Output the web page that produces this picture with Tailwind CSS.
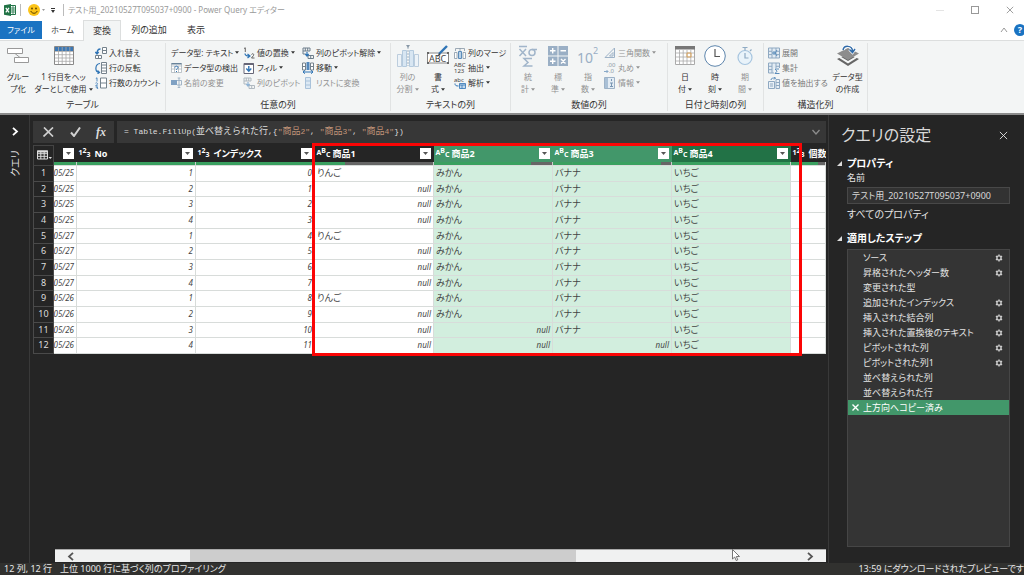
<!DOCTYPE html>
<html lang="ja">
<head>
    <meta charset="UTF-8">
    <meta name="viewport" content="width=device-width, initial-scale=1.0">
    <title>Power Query エディター</title>
    <script src="https://cdn.jsdelivr.net/npm/@tailwindcss/browser@4"></script>
</head>
<body class="h-screen flex flex-col overflow-hidden bg-[#252525] text-[9px] leading-[12px] text-[#333] whitespace-nowrap font-['Noto_Sans','Noto_Sans_CJK_JP',sans-serif] [font-feature-settings:'palt']">

    <!-- Shared icons -->
    <svg class="hidden">
        <symbol id="caret" viewBox="0 0 5 3"><path d="M0 0h5L2.5 3z" fill="currentColor"/></symbol>
        <symbol id="close" viewBox="0 0 10 10"><path d="M1 1l8 8M9 1L1 9" stroke="currentColor" fill="none"/></symbol>
        <symbol id="gear" viewBox="0 0 10 10">
            <circle cx="5" cy="5" r="2.6" fill="none" stroke="currentColor" stroke-width="1.7"/>
            <path d="M5 .6v1.6M5 7.8v1.6M1.2 2.8l1.4.8M7.4 6.4l1.4.8M1.2 7.2l1.4-.8M7.4 3.6l1.4-.8" stroke="currentColor" stroke-width="1.8"/>
        </symbol>
        <symbol id="pivot" viewBox="0 0 12 12">
            <path d="M1 1h7v3H1zM3.3 1v3M5.7 1v3M1 4v3h2.5M6 8.500h5.500v3H6zM8.700 8.500v3" fill="none" stroke="#6e7f8d"/>
            <path d="M5 5v3.500M3.300 7L5 9l1.700-2" fill="none" stroke="#2f74b5" stroke-width="1.200"/>
        </symbol>
        <symbol id="columns" viewBox="0 0 12 12">
            <path d="M.5 1h11v10H.5zM4 1v10M8 1v10M.5 4.300H4M.5 7.600H4M8 4.300h3.500M8 7.600h3.500" fill="#e3ecf4" stroke="#8fa9c2"/>
        </symbol>
    </svg>

    <!-- Title bar -->
    <header class="h-5 shrink-0 bg-white flex items-center pl-1 text-[#9a9a9a]">
        <svg class="w-3 h-3" viewBox="0 0 12 12">
            <path d="M6 1.500h5.500v9H6" fill="#fff" stroke="#217346"/>
            <path d="M6 4h5M6 6h5M6 8h5M9 2v8" stroke="#217346" stroke-width=".8"/>
            <path d="M0 1.300L7 0v12L0 10.700z" fill="#217346"/>
            <path d="M1.800 3.800l3.200 4.500M5 3.800L1.800 8.300" stroke="#fff" stroke-width="1.200"/>
        </svg>
        <span class="w-px h-3 ml-1 bg-[#bbb]"></span>
        <svg class="w-3 h-3 ml-[7px]" viewBox="0 0 12 12">
            <circle cx="6" cy="6" r="6" fill="#fcc419"/>
            <circle cx="4" cy="4.500" r=".9" fill="#5d4300"/><circle cx="8" cy="4.500" r=".9" fill="#5d4300"/>
            <path d="M2.800 7c1 3 5.400 3 6.400 0" fill="none" stroke="#5d4300"/>
        </svg>
        <svg class="w-[3px] h-[2px] ml-0.5"><use href="#caret"/></svg>
        <svg class="w-1 h-[5px] ml-1.5 text-[#333]" viewBox="0 0 4 5"><path d="M0 .5h4" stroke="currentColor"/><path d="M0 2h4L2 5z" fill="currentColor"/></svg>
        <span class="w-px h-3 ml-2 bg-[#bbb]"></span>
        <h1 class="ml-1 text-[8px]">テスト用_20210527T095037+0900 - Power Query エディター</h1>
        <div class="ml-auto flex items-center gap-[27px] pr-2.5">
            <button aria-label="最小化" class="w-2 h-2 flex items-center"><span class="w-full h-px bg-[#e4e4e4]"></span></button>
            <button aria-label="最大化" class="w-2 h-2 border border-[#999]"></button>
            <button aria-label="閉じる" class="w-2 h-2 text-[#888]"><svg class="w-2 h-2"><use href="#close"/></svg></button>
        </div>
    </header>

    <!-- Tabs -->
    <nav class="h-[21px] shrink-0 bg-white border-b border-[#dcdede] flex">
        <button class="w-[42px] h-[18px] mt-px bg-[#1a73c2] text-white text-[8px]">ファイル</button>
        <button class="w-[41px] text-[8px]">ホーム</button>
        <button class="w-[38px] h-[21px] bg-[#f3f5f5] border-x border-t border-[#dcdede]">変換</button>
        <button class="w-[56px]">列の追加</button>
        <button class="w-[38px]">表示</button>
        <div class="ml-auto flex items-center gap-1.5">
            <button aria-label="リボンを折りたたむ" class="w-2"><svg class="w-2 h-1.5" viewBox="0 0 8 6"><path d="M1 5l3-4 3 4" fill="none" stroke="#999"/></svg></button>
            <button aria-label="ヘルプ" class="w-3 h-3 -mr-0.5 rounded-full bg-[#1a73c2] text-white font-bold leading-3">?</button>
        </div>
    </nav>

    <!-- Ribbon -->
    <section class="h-[74px] shrink-0 bg-[#f3f5f5] border-b-2 border-[#8b8b8b] flex pt-0.5 pb-0.5
        [&_button]:text-left [&_button]:text-[8px] [&_button]:shrink-0 [&_.big]:flex [&_.big]:flex-col [&_.big]:items-center [&_.big]:h-[54px] [&_.big]:pt-0.5 [&_.big>svg]:mb-1 [&_.big>svg]:h-[22px] [&_.big>span]:text-center
        [&_.row]:h-[15px] [&_.row]:flex [&_.row]:items-center [&_.row]:gap-[2px] [&_.off]:text-[#929292]">

        <div class="w-[166px] border-r border-[#e1e3e3] flex flex-col justify-between">
            <div class="flex">
                <button class="big w-9">
                    <svg class="w-[22px]" viewBox="0 0 22 22"><path d="M.5 3.500h15v5H.5zM7.500 12.500h14v5h-14zM8 8.500l5 4" fill="#fff" stroke="#999"/></svg>
                    <span>グルー<br>プ化</span>
                </button>
                <button class="big w-[55px]">
                    <svg class="w-5" viewBox="0 0 20 22">
                        <path d="M.5 1.500h19v18H.5z" fill="#fff" stroke="#888"/><path d="M1 2h18v4H1z" fill="#3c78b4"/>
                        <path d="M1 6.500h18M1 9.700h18M1 13h18M1 16.300h18M4.500 2v17M8.200 2v17M12 2v17M15.800 2v17" stroke="#a8a8a8" stroke-width=".8"/>
                    </svg>
                    <span>1 行目をヘッ<br>ダーとして使用 <svg class="inline w-1 h-[3px] mb-px"><use href="#caret"/></svg></span>
                </button>
                <div class="pl-1 pt-0.5">
                    <button class="row"><svg class="w-3 h-3" viewBox="0 0 12 12"><path d="M7.500.5h4v6h-4zM7.500 3.500h4M.5 8.500h6v3h-6zM3.500 8.500v3" fill="#fff" stroke="#75828c"/><path d="M5.500 2C3 2 2 3.500 2 6.500M.3 5L2 7l1.700-2" fill="none" stroke="#2f74b5" stroke-width="1.300"/></svg>入れ替え</button>
                    <button class="row"><svg class="w-3 h-3" viewBox="0 0 12 12"><path d="M6.500.5h5v11h-5zM6.500 3h5M6.500 6h5M6.500 9h5" fill="#fff" stroke="#75828c"/><path d="M5 1.500C-.3 2-.3 10 4 10.500M2.500 8.500l2 2-2 1.300" fill="none" stroke="#2f74b5" stroke-width="1.200"/></svg>行の反転</button>
                    <button class="row"><svg class="w-3 h-3" viewBox="0 0 12 12"><path d="M5.500 1h6v10h-6zM5.500 6h6" fill="#fff" stroke="#75828c"/><path d="M.8 1.500L2 .8V4.500M.5 6.200c1-1 2.500 0 1.800 1L.7 8.800h2M.7 10h2L1.800 11c1.200 0 1.200 1 0 1" fill="none" stroke="#2f74b5" stroke-width=".8"/></svg>行数のカウント</button>
                </div>
            </div>
            <p class="text-center">テーブル</p>
        </div>

        <div class="w-[225px] border-r border-[#e1e3e3] flex flex-col justify-between">
            <div class="flex pl-[5px] pt-0.5">
                <div class="w-[72px]">
                    <button class="row">データ型: テキスト <svg class="w-1 h-[3px]"><use href="#caret"/></svg></button>
                    <button class="row"><svg class="w-[11px] h-3" viewBox="0 0 11 12"><path d="M.5 1.500h10v9H.5zM.5 4h10M3.500 4v6.500M7.500 4v6.500M.5 7h10" fill="#fff" stroke="#a4adb5" stroke-width=".7"/><path d="M.5 1h10v1.500H.5z" fill="#698399"/><path d="M4 5.500c0-2 3-1.600 3 0 0 1-1.500 1-1.500 2.300M5.500 9v1" fill="none" stroke="#2f74b5"/></svg>データ型の検出</button>
                    <button class="row off"><svg class="w-[11px] h-3" viewBox="0 0 11 12"><path d="M0 3h6v5H0z" fill="#7fa1c3"/><path d="M6 3.500h4.500v4.500H6M8 1v9M6.700 1h2.600M6.700 10.500h2.600" fill="none" stroke="#9aafc3" stroke-width=".9"/></svg>名前の変更</button>
                </div>
                <div class="w-[59px]">
                    <button class="row"><svg class="w-3 h-3" viewBox="0 0 12 12"><path d="M1 1.500L2.300.8V5M8.500 7.500c.8-1.500 3-.5 2 1L8.500 11h3" fill="none" stroke="#555" stroke-width=".9"/><path d="M2 6.500c0 2 1 2.500 4 2.500M4.500 7L7 9l-2.500 2" fill="none" stroke="#2f74b5" stroke-width="1.200"/></svg>値の置換 <svg class="w-1 h-[3px]"><use href="#caret"/></svg></button>
                    <button class="row"><svg class="w-3 h-3" viewBox="0 0 12 12"><path d="M1 1.500h9.500v10H1z" fill="#fff" stroke="#667"/><path d="M1 1h9.500v2H1z" fill="#667"/><path d="M5.800 4v5M3.300 6.500l2.500 2.700 2.500-2.700" fill="none" stroke="#2f74b5" stroke-width="1.400"/></svg>フィル <svg class="w-1 h-[3px]"><use href="#caret"/></svg></button>
                    <button class="row off"><svg class="w-3 h-3 opacity-50"><use href="#pivot"/></svg>列のピボット</button>
                </div>
                <div>
                    <button class="row"><svg class="w-3 h-3"><use href="#pivot"/></svg>列のピボット解除 <svg class="w-1 h-[3px]"><use href="#caret"/></svg></button>
                    <button class="row"><svg class="w-3 h-3" viewBox="0 0 12 12"><path d="M.5 1h3v7h-3zM8.500 1h3v7h-3zM.5 4.500h3M8.500 4.500h3" fill="#fff" stroke="#75828c"/><path d="M4.500 0h3v8h-3z" fill="#5488bb"/><path d="M1 10h10M3 8.300L1 10l2 1.700M9 8.300l2 1.700-2 1.700" fill="none" stroke="#2f74b5"/></svg>移動 <svg class="w-1 h-[3px]"><use href="#caret"/></svg></button>
                    <button class="row off"><svg class="w-3 h-3" viewBox="0 0 12 12"><path d="M3.500.5h5v11h-5zM3.500 4h5M3.500 8h5" fill="#dce9f4" stroke="#a9c2da"/></svg>リストに変換</button>
                </div>
            </div>
            <p class="text-center">任意の列</p>
        </div>

        <div class="w-[120px] border-r border-[#e1e3e3] flex flex-col justify-between">
            <div class="flex pl-px">
                <button class="big off w-[31px]">
                    <svg class="w-[22px]" viewBox="0 0 22 22"><path d="M.5 9.500h4v12h-4zM17.500 9.500h4v12h-4z" fill="#edf3f8" stroke="#bccddd"/><path d="M5.500 5.500h4v16h-4zM12.500 5.500h4v16h-4z" fill="#d8e6f2" stroke="#b4cade"/><path d="M11 2v19" stroke="#a3b3c2" stroke-dasharray="2 1"/><path d="M9 0h4l-2 3z" fill="#8797a6"/></svg>
                    <span>列の<br>分割 <svg class="inline w-1 h-[3px] mb-px"><use href="#caret"/></svg></span>
                </button>
                <button class="big w-[30px]">
                    <svg class="w-[22px]" viewBox="0 0 22 22"><path d="M.5 8h21v10H.5z" fill="#fff" stroke="#888"/><path d="M0 7h2v2H0zM20 7h2v2h-2zM0 17h2v2H0zM20 17h2v2h-2z" fill="#666"/><text x="2" y="16.500" font-size="9" fill="#444">ABC</text><path d="M20 1l-8 8" stroke="#2f74b5" stroke-width="2.400"/><path d="M12.500 8l-3 4 4-2z" fill="#444"/></svg>
                    <span>書<br>式 <svg class="inline w-1 h-[3px] mb-px"><use href="#caret"/></svg></span>
                </button>
                <div class="pl-px pt-0.5">
                    <button class="row"><svg class="w-3 h-3" viewBox="0 0 12 12"><path d="M.5 5.500h2.500v6H.5zM9 5.500h2.500v6H9z" fill="#fff" stroke="#8797a6" stroke-width=".8"/><path d="M4.500 4.500h3v7h-3z" fill="#b9d2e8" stroke="#5b8cba"/><path d="M1.500 4V1.500h9V4M6 1v3" fill="none" stroke="#8797a6" stroke-width=".8"/></svg>列のマージ</button>
                    <button class="row"><svg class="w-3 h-3 overflow-visible" viewBox="0 0 12 12" fill="#444"><text x="0" y="5" font-size="6">ABC</text><text x="0" y="11" font-size="6">123</text></svg>抽出 <svg class="w-1 h-[3px]"><use href="#caret"/></svg></button>
                    <button class="row"><svg class="w-3 h-3 overflow-visible" viewBox="0 0 12 12"><text x="0" y="5" font-size="6" fill="#444">abc</text><path d="M5.500 6.500h6v5h-6z" fill="#c3d9ed" stroke="#2f74b5" stroke-width=".8"/><path d="M5.500 8h6M8 8v3.500" stroke="#2f74b5" stroke-width=".8"/><path d="M1 6.500c0 2 1 2.500 3.500 2.500" fill="none" stroke="#2f74b5"/></svg>解析 <svg class="w-1 h-[3px]"><use href="#caret"/></svg></button>
                </div>
            </div>
            <p class="text-center">テキストの列</p>
        </div>

        <div class="w-[157px] border-r border-[#e1e3e3] flex flex-col justify-between text-[#929292]">
            <div class="flex pl-0.5">
                <button class="big w-[30px]">
                    <svg class="w-5" viewBox="0 0 20 22" fill="none" stroke="#a1b5ca" stroke-width="1.500"><path d="M1 1.500h8M1.500 4l6.500 7M8 4l-6.500 7M19 4.500h-5"/><circle cx="14" cy="7.500" r="3"/><path d="M14 13.500H6l4 4-4 3.500h8.500"/></svg>
                    <span>統<br>計 <svg class="inline w-1 h-[3px] mb-px"><use href="#caret"/></svg></span>
                </button>
                <button class="big w-[30px]">
                    <svg class="w-5" viewBox="0 0 20 22"><path d="M0 1h9.500v9.500H0zM10.500 1H20v9.500h-9.500zM0 11.500h9.500V21H0zM10.500 11.500H20V21h-9.500z" fill="#9aafc5"/><path d="M2 5.700h5.500M4.700 3v5.500M12.500 5.700H18M2 16.300h5.500M4.700 13.500V19M13 14l4.500 4.500M17.500 14L13 18.500" stroke="#fff" stroke-width="1.400"/></svg>
                    <span>標<br>準 <svg class="inline w-1 h-[3px] mb-px"><use href="#caret"/></svg></span>
                </button>
                <button class="big w-[30px]">
                    <svg class="w-5 overflow-visible" viewBox="0 0 20 22" fill="#9aafc5"><text x="-1" y="18" font-size="14">10</text><text x="15" y="9" font-size="9">2</text></svg>
                    <span>指<br>数 <svg class="inline w-1 h-[3px] mb-px"><use href="#caret"/></svg></span>
                </button>
                <div class="pl-px pt-0.5">
                    <button class="row"><svg class="w-3 h-3" viewBox="0 0 12 12"><path d="M1 10.500L10.500 1v9.500zM5.500 9L9 5.500V9z" fill="none" stroke="#9db2c7"/></svg>三角関数 <svg class="w-1 h-[3px]"><use href="#caret"/></svg></button>
                    <button class="row"><svg class="w-3 h-3 overflow-visible" viewBox="0 0 12 12"><text x="3" y="5" font-size="6" fill="#8d9aa6">.00</text><text x="5" y="11" font-size="6" fill="#8d9aa6">.0</text><path d="M0 9.500h4M2.500 8L4 9.500 2.500 11" fill="none" stroke="#88a8c7"/></svg>丸め <svg class="w-1 h-[3px]"><use href="#caret"/></svg></button>
                    <button class="row"><svg class="w-3 h-3" viewBox="0 0 12 12"><path d="M.5.5h10v11H.5z" fill="#e3ecf4" stroke="#9db2c7"/><path d="M1 1h3v10H1z" fill="#a9c0d6"/><path d="M7.500 2v2M6 6h3M7.500 6v3.500M6 9.500h3" stroke="#7996b3"/></svg>情報 <svg class="w-1 h-[3px]"><use href="#caret"/></svg></button>
                </div>
            </div>
            <p class="text-center text-[#333]">数値の列</p>
        </div>

        <div class="w-[96px] border-r border-[#e1e3e3] flex flex-col justify-between">
            <div class="flex pl-0.5">
                <button class="big w-[30px]">
                    <svg class="w-5" viewBox="0 0 20 22"><path d="M.5 1.500h19v18H.5z" fill="#fff" stroke="#aaa"/><path d="M0 1h20v3.500H0z" fill="#777"/><path d="M1 8h18M1 12h18M1 16h18M4.500 5v14M8.200 5v14M12 5v14M15.800 5v14" stroke="#aaa" stroke-width=".8"/><path d="M12 8h4v4h-4z" fill="none" stroke="#dca45a"/></svg>
                    <span>日<br>付 <svg class="inline w-1 h-[3px] mb-px"><use href="#caret"/></svg></span>
                </button>
                <button class="big w-[30px]">
                    <svg class="w-[22px]" viewBox="0 0 22 22"><circle cx="11" cy="11" r="10.300" fill="#fff" stroke="#5f86ad"/><path d="M11 4v7.500h5" fill="none" stroke="#555" stroke-width="1.200"/></svg>
                    <span>時<br>刻 <svg class="inline w-1 h-[3px] mb-px"><use href="#caret"/></svg></span>
                </button>
                <button class="big off w-[30px]">
                    <svg class="w-4" viewBox="0 0 16 22"><circle cx="8" cy="12.500" r="7" fill="#e9f3fa" stroke="#a7c5df" stroke-width="1.200"/><path d="M8 5.500V3M5.500 2.500h5M13 6l1.500-1.500M8 8v5h3.500" fill="none" stroke="#8fabc4" stroke-width="1.200"/></svg>
                    <span>期<br>間 <svg class="inline w-1 h-[3px] mb-px"><use href="#caret"/></svg></span>
                </button>
            </div>
            <p class="text-center">日付と時刻の列</p>
        </div>

        <div class="w-[104px] border-r border-[#e1e3e3] flex flex-col justify-between">
            <div class="flex pl-1">
                <div class="w-[63px] pt-0.5 text-[#777]">
                    <button class="row"><svg class="w-3 h-3" viewBox="0 0 12 12"><use href="#columns"/><path d="M6 4v4M4 6h4M9 3L7 6l2 3" fill="none" stroke="#5b8cba"/></svg>展開</button>
                    <button class="row"><svg class="w-3 h-3" viewBox="0 0 12 12"><use href="#columns"/><path d="M6 6h6v6H6z" fill="#f3f5f5"/><path d="M11 7H7l2 2.200L7 11.500h4.500" fill="none" stroke="#5b8cba"/></svg>集計</button>
                    <button class="row"><svg class="w-3 h-3" viewBox="0 0 12 12"><path d="M.5 4.500h6v7h-6zM2 7h3M2 9h3M8 2.500h3.500v9H8zM8 5.500h3.500M8 8.500h3.500" fill="#e9f0f6" stroke="#8fa9c2"/><path d="M3 3c0-2 2-2 4.500-2M6 0l1.500 1L6 2.500" fill="none" stroke="#5b8cba"/></svg>値を抽出する</button>
                </div>
                <button class="big w-[33px]">
                    <svg class="w-[22px]" viewBox="0 0 22 22"><path d="M0 14l11-5 11 5-11 7z" fill="#666"/><path d="M0 9.500l11 6.500 11-6.500v2L11 18.500 0 11.500z" fill="#f3f5f5"/><path d="M0 8.500L11 3l11 5.500L11 15z" fill="#8d8d8d"/><path d="M6 5c1-5 9-5 9.500 1M12.500 4.500l3 3 2.500-3.500" fill="none" stroke="#fff" stroke-width="3"/><path d="M6 5c1-5 9-5 9.500 1M12.500 4.500l3 3 2.500-3.500" fill="none" stroke="#2f6aa8" stroke-width="1.500"/></svg>
                    <span>データ型<br>の作成</span>
                </button>
            </div>
            <p class="text-center">構造化列</p>
        </div>
    </section>

    <div class="flex-1 min-h-0 flex">
        <!-- Collapsed query list -->
        <aside class="w-[30px] shrink-0 border-r border-[#393939] flex flex-col items-center pt-3 text-[#ddd]">
            <button aria-label="展開"><svg class="w-2 h-[9px]" viewBox="0 0 8 9"><path d="M2 .8l4 3.700-4 3.700" fill="none" stroke="#fff" stroke-width="1.800"/></svg></button>
            <span class="mt-3.5 text-[10px] [writing-mode:vertical-rl] [text-orientation:sideways] rotate-180">クエリ</span>
        </aside>

        <main class="flex-1 min-w-0 flex flex-col pl-[3px] pr-0.5 pt-1.5 border-r border-[#393939]">
            <!-- Formula bar -->
            <div class="h-[22px] shrink-0 flex gap-[3px] text-[#ddd]">
                <div class="w-[81px] bg-[#373737] flex items-center justify-between pl-2.5 pr-2">
                    <button aria-label="キャンセル"><svg class="w-[11px] h-2.5" viewBox="0 0 11 10"><path d="M1 .5l9 9M10 .5l-9.500 9" stroke="#d0d0d0" stroke-width="1.700"/></svg></button>
                    <button aria-label="確定"><svg class="w-[11px] h-2.5" viewBox="0 0 11 10"><path d="M1 5.500l3 3.500 6-8.500" fill="none" stroke="#d0d0d0" stroke-width="2"/></svg></button>
                    <button aria-label="関数" class="font-['Liberation_Serif',serif] italic font-bold text-[12px]">fx</button>
                </div>
                <div class="flex-1 bg-[#373737] flex items-center pl-[7px] pr-1.5">
                    <div role="textbox" aria-label="数式" contenteditable="true" spellcheck="false" class="flex-1 font-['Liberation_Mono','Noto_Sans_CJK_JP',monospace] text-[8px] [font-feature-settings:normal]">= Table.FillUp(<span class="text-[9px]">並べ替えられた行</span>,{<span class="text-[#c09377]">"<span class="text-[9px]">商品</span>2"</span>, <span class="text-[#c09377]">"<span class="text-[9px]">商品</span>3"</span>, <span class="text-[#c09377]">"<span class="text-[9px]">商品</span>4"</span>})</div>
                    <button aria-label="数式バーを展開"><svg class="w-2 h-1.5" viewBox="0 0 8 6"><path d="M.5 1L4 5l3.500-4" fill="none" stroke="#8c8c8c" stroke-width="1.300"/></svg></button>
                </div>
            </div>

            <!-- Data preview -->
            <div class="relative mt-0.5">
                <table class="w-full table-fixed border-collapse">
                    <colgroup>
                        <col class="w-5"><col class="w-[23px]"><col class="w-[119px]"><col class="w-[119px]"><col class="w-[119px]"><col class="w-[119px]"><col class="w-[119px]"><col class="w-[119px]"><col>
                    </colgroup>
                    <thead><tr id="head"></tr></thead>
                    <tbody id="rows"></tbody>
                </table>
                <!-- Highlighted area -->
                <div class="absolute -top-0.5 left-[279px] w-[490px] h-[213px] border-3 border-[#fb0505] pointer-events-none"></div>
            </div>

            <!-- Horizontal scrollbar -->
            <div class="relative mt-auto mb-px ml-[22px] h-[13px] shrink-0 bg-[#f0f1f1] border-t border-[#aaa] flex items-center">
                <button aria-label="左へ" class="w-[135px] pl-3"><svg class="w-2 h-[9px]" viewBox="0 0 8 9"><path d="M6 .8L2 4.500l4 3.700" fill="none" stroke="#555" stroke-width="1.800"/></svg></button>
                <div class="w-1/2 h-full bg-[#cdcdcd]"></div>
                <button aria-label="右へ" class="ml-auto mr-3"><svg class="w-2 h-[9px]" viewBox="0 0 8 9"><path d="M2 .8l4 3.700-4 3.700" fill="none" stroke="#555" stroke-width="1.800"/></svg></button>
                <svg class="absolute left-[677px] -top-px w-2 h-3" viewBox="0 0 8 12"><path d="M.5.5v9.500l2.200-2 1.500 3.500 1.600-.7-1.500-3.300h3.200z" fill="#fff" stroke="#555" stroke-width=".8"/></svg>
            </div>
        </main>

        <!-- Query settings -->
        <aside class="w-[195px] shrink-0 flex flex-col pl-2 pr-3.5 pt-2 pb-4 text-[#e4e4e4]">
            <div class="flex items-center justify-between pl-1 pr-0.5">
                <h2 class="text-[16px] leading-6 text-[#d8d8d8]">クエリの設定</h2>
                <button aria-label="閉じる"><svg class="w-[9px] h-[9px]"><use href="#close"/></svg></button>
            </div>
            <h3 class="mt-2.5 flex items-center gap-[5px] font-bold text-[10px] text-white"><svg class="w-[5px] h-[5px]" viewBox="0 0 5 5"><path d="M5 0v5H0z" fill="#ddd"/></svg>プロパティ</h3>
            <div class="pl-2.5 flex flex-col items-start">
                <label for="name" class="mt-[3px]">名前</label>
                <input id="name" value="テスト用_20210527T095037+0900" class="mt-[3px] w-full h-[17px] px-1 bg-[#323232] border border-[#484848] text-[#d8d8d8]">
                <a href="#" class="mt-1 text-[10px]">すべてのプロパティ</a>
            </div>
            <h3 class="mt-3 flex items-center gap-[5px] font-bold text-[10px] text-white"><svg class="w-[5px] h-[5px]" viewBox="0 0 5 5"><path d="M5 0v5H0z" fill="#ddd"/></svg>適用したステップ</h3>
            <ul id="steps" class="flex-1 mt-[5px] ml-2.5 bg-[#343434] border border-[#464646]"></ul>
        </aside>
    </div>

    <!-- Status bar -->
    <footer class="h-3 shrink-0 flex items-center gap-2 pl-1 bg-[#31312f] text-[#e8e8e8]">
        <span>12 列, 12 行</span>
        <span>上位 1000 行に基づく列のプロファイリング</span>
        <span class="ml-auto">13:59 にダウンロードされたプレビューです</span>
    </footer>

    <script>
        // valid = share of non-empty values shown in the quality bar
        const columns = [
            { name: '', type: '', valid: 100 },
            { name: 'No', type: 'num', valid: 100 },
            { name: 'インデックス', type: 'num', valid: 100 },
            { name: '商品1', type: 'text', valid: 26 },
            { name: '商品2', type: 'text', valid: 83, bg: 'bg-[#42976a]' },
            { name: '商品3', type: 'text', valid: 92, bg: 'bg-[#42976a]' },
            { name: '商品4', type: 'text', valid: 100, bg: 'bg-[#227246]' },
            { name: '個数', type: 'num', valid: 80, last: true },
        ];

        const types = {
            '': '',
            num: '<span class="w-3 shrink-0 flex text-[7px] leading-3"><span>1</span><span class="-mt-0.5">2</span><span class="mt-0.5">3</span></span>',
            text: '<span class="w-3 shrink-0 flex text-[7px] leading-3"><span>A</span><span class="-mt-0.5">B</span><span class="mt-0.5">C</span></span>',
        };

        const filterButton = '<button aria-label="フィルター" class="ml-auto w-[11px] h-[11px] shrink-0 bg-white text-[#555] flex items-center justify-center"><svg class="w-[5px] h-[3px]"><use href="#caret"/></svg></button>';

        document.getElementById('head').innerHTML = `
            <th class="p-0 bg-[#252525] border border-[#444]"><svg class="ml-[3px] w-[15px] h-2.5" viewBox="0 0 15 10"><path d="M.5 1h10v8H.5zM.5 3.700h10M.5 6.300h10M3.800 1v8M7.200 1v8" fill="none" stroke="#ddd"/><path d="M0 .5h11v2H0z" fill="#ddd"/><path d="M11.500 7H15l-1.700 2z" fill="#ddd"/></svg></th>
        ` + columns.map(col => `
            <th class="p-0 overflow-hidden font-bold text-white ${col.bg || 'bg-[#252525]'}">
                <div class="h-4 flex items-center gap-1 pl-0.5 pr-[3px]">${types[col.type]}<span>${col.name}</span>${col.last ? '' : filterButton}</div>
                <div class="h-[3px] bg-[#666] border-r border-[#ccc]"><div class="h-full bg-[#3aa060]" style="width: ${col.valid}%"></div></div>
            </th>
        `).join('');

        const rows = [
            ['05/25', 1, 0, 'りんご', 'みかん', 'バナナ', 'いちご'],
            ['05/25', 2, 1, null, 'みかん', 'バナナ', 'いちご'],
            ['05/25', 3, 2, null, 'みかん', 'バナナ', 'いちご'],
            ['05/25', 4, 3, null, 'みかん', 'バナナ', 'いちご'],
            ['05/27', 1, 4, 'りんご', 'みかん', 'バナナ', 'いちご'],
            ['05/27', 2, 5, null, 'みかん', 'バナナ', 'いちご'],
            ['05/27', 3, 6, null, 'みかん', 'バナナ', 'いちご'],
            ['05/27', 4, 7, null, 'みかん', 'バナナ', 'いちご'],
            ['05/26', 1, 8, 'りんご', 'みかん', 'バナナ', 'いちご'],
            ['05/26', 2, 9, null, 'みかん', 'バナナ', 'いちご'],
            ['05/26', 3, 10, null, null, 'バナナ', 'いちご'],
            ['05/26', 4, 11, null, null, null, 'いちご'],
        ];

        // Two 16px rows for each 15px one
        document.getElementById('rows').innerHTML = rows.map((row, i) => `
            <tr class="${i % 3 === 1 ? 'h-[15px]' : 'h-4'}">
                <th class="p-0 bg-[#252525] border border-[#4a4a4a] font-normal text-[#ddd]">${i + 1}</th>
                ${row.map((value, c) => {
                    const isText = c > 2 && value !== null;
                    const bg = c > 3 ? 'bg-[#d2eede]' : 'bg-white';
                    const kind = isText ? 'pl-0.5' : 'justify-end italic text-[8px] pr-0.5';
                    return `<td class="p-0 border border-[#d8dcda] text-[#444] ${bg}"><div class="flex overflow-hidden ${kind}"><span>${value === null ? 'null' : value}</span></div></td>`;
                }).join('')}
                <td class="p-0 border border-[#d8dcda] bg-white"></td>
            </tr>
        `).join('');

        const steps = [
            ['ソース', true], ['昇格されたヘッダー数', true], ['変更された型', false],
            ['追加されたインデックス', true], ['挿入された結合列', true], ['挿入された置換後のテキスト', true],
            ['ピボットされた列', true], ['ピボットされた列1', true], ['並べ替えられた列', false],
            ['並べ替えられた行', false], ['上方向へコピー済み', false],
        ];

        document.getElementById('steps').innerHTML = steps.map(([name, hasSettings], i) => `
            <li class="h-[15px] flex items-center pr-1.5 ${i === steps.length - 1 ? 'bg-[#42976a] text-white' : ''}">
                <span class="w-[15px] pl-1">${i === steps.length - 1 ? '<svg class="w-[7px] h-[7px]" viewBox="0 0 7 7"><path d="M.5.5l6 6M6.500.5l-6 6" stroke="#fff" stroke-width="1.400"/></svg>' : ''}</span>
                <span>${name}</span>
                ${hasSettings ? '<button aria-label="設定" class="ml-auto text-[#ccc]"><svg class="w-2 h-2"><use href="#gear"/></svg></button>' : ''}
            </li>
        `).join('');
    </script>
</body>
</html>
